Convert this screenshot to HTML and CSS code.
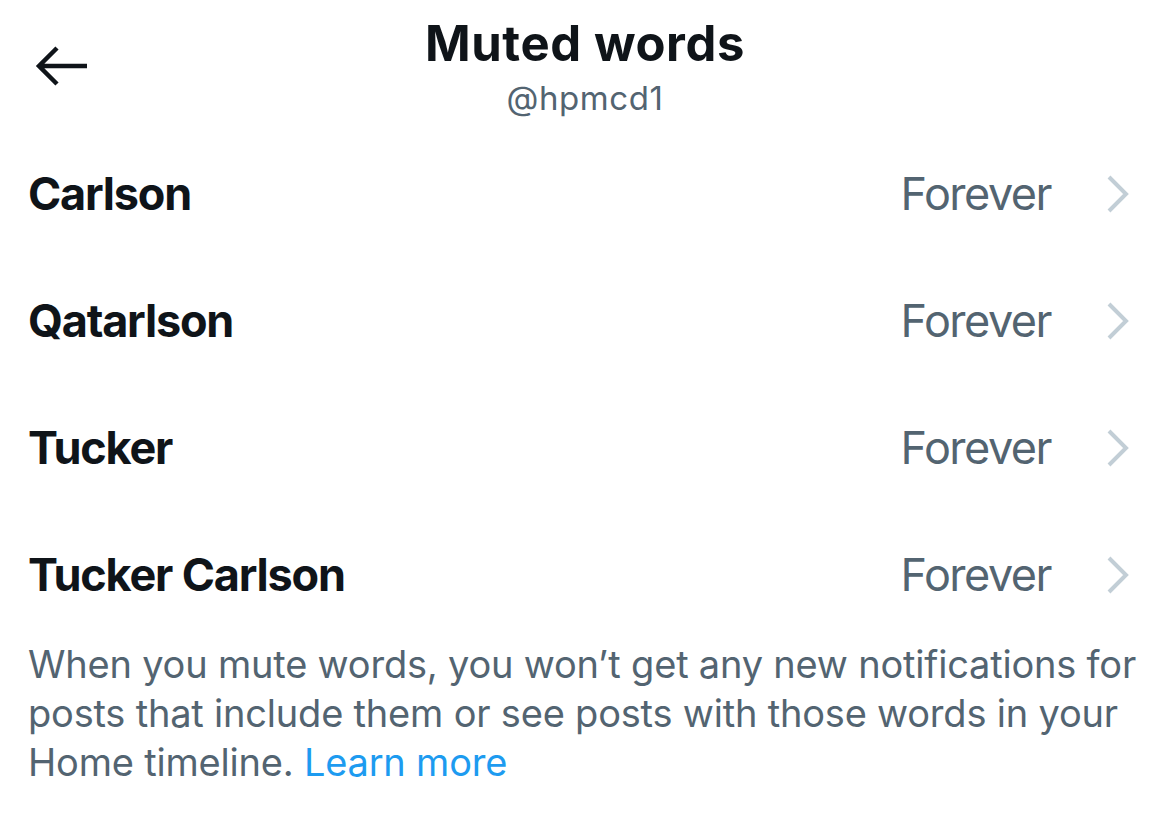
FILE: index.html
```html
<!DOCTYPE html>
<html>
<head>
<meta charset="utf-8">
<link rel="stylesheet" href="styles.css">
</head>
<body>
<div class="screen">
  <header class="header">
    <svg class="back" viewBox="0 0 56 48" width="56" height="48">
      <path d="M54 24H6M24 6L6 24l18 18" fill="none" stroke="#0f1419" stroke-width="4.5" stroke-linecap="butt" stroke-linejoin="miter"/>
    </svg>
    <div class="titles">
      <div class="title">Muted words</div>
      <div class="handle">@hpmcd1</div>
    </div>
  </header>
  <ul class="list">
    <li class="row"><span class="word">Carlson</span><span class="dur">Forever</span><svg class="chev" viewBox="0 0 24 38" width="24" height="38"><path d="M3 2l17 17L3 36" fill="none" stroke="#c2ced6" stroke-width="4"/></svg></li>
    <li class="row"><span class="word">Qatarlson</span><span class="dur">Forever</span><svg class="chev" viewBox="0 0 24 38" width="24" height="38"><path d="M3 2l17 17L3 36" fill="none" stroke="#c2ced6" stroke-width="4"/></svg></li>
    <li class="row"><span class="word">Tucker</span><span class="dur">Forever</span><svg class="chev" viewBox="0 0 24 38" width="24" height="38"><path d="M3 2l17 17L3 36" fill="none" stroke="#c2ced6" stroke-width="4"/></svg></li>
    <li class="row"><span class="word">Tucker Carlson</span><span class="dur">Forever</span><svg class="chev" viewBox="0 0 24 38" width="24" height="38"><path d="M3 2l17 17L3 36" fill="none" stroke="#c2ced6" stroke-width="4"/></svg></li>
  </ul>
  <p class="note">When you mute words, you won’t get any new notifications for posts that include them or see posts with those words in your Home timeline. <a class="link" href="#">Learn more</a></p>
</div>
</body>
</html>
```
FILE: styles.css
```css
html, body {
  margin: 0;
  padding: 0;
  background: #ffffff;
}
body {
  font-family: Inter, "Liberation Sans", sans-serif;
  color: #0f1419;
  width: 1170px;
  height: 830px;
  overflow: hidden;
}
.screen {
  display: flex;
  flex-direction: column;
}
.header {
  position: relative;
  height: 130px;
  display: flex;
  justify-content: center;
}
.back {
  position: absolute;
  left: 33px;
  top: 42px;
}
.titles {
  display: flex;
  flex-direction: column;
  align-items: center;
  padding-top: 14px;
}
.title {
  font-size: 49px;
  font-weight: 700;
  line-height: 60px;
  letter-spacing: 0.6px;
}
.handle {
  font-size: 33px;
  line-height: 40px;
  color: #536471;
  margin-top: 4px;
  letter-spacing: 0.6px;
}
.list {
  list-style: none;
  margin: 0;
  padding: 0;
}
.row {
  height: 127px;
  display: flex;
  align-items: center;
  padding: 0 40px 0 28px;
}
.word {
  flex: 1;
  font-size: 45px;
  font-weight: 700;
  letter-spacing: -1.2px;
}
.dur {
  font-size: 45px;
  color: #536471;
  letter-spacing: -1.5px;
}
.chev {
  margin-left: 55px;
}
.note {
  margin: 2px 0 0 0;
  padding: 0 20px 0 28px;
  font-size: 38px;
  line-height: 49px;
  color: #536471;
  letter-spacing: -0.2px;
}
.link {
  color: #1d9bf0;
  text-decoration: none;
}
```
